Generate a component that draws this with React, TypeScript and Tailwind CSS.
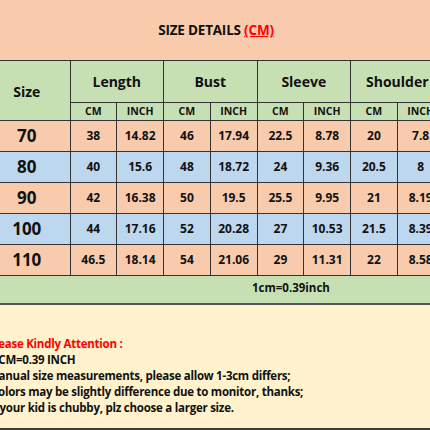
const rows = [
  { size: "70", v: ["38", "14.82", "46", "17.94", "22.5", "8.78", "20", "7.8"], bg: "bg-[#f8cbad]" },
  { size: "80", v: ["40", "15.6", "48", "18.72", "24", "9.36", "20.5", "8"], bg: "bg-[#bdd7ee]" },
  { size: "90", v: ["42", "16.38", "50", "19.5", "25.5", "9.95", "21", "8.19"], bg: "bg-[#f8cbad]" },
  { size: "100", v: ["44", "17.16", "52", "20.28", "27", "10.53", "21.5", "8.39"], bg: "bg-[#bdd7ee]" },
  { size: "110", v: ["46.5", "18.14", "54", "21.06", "29", "11.31", "22", "8.58"], bg: "bg-[#f8cbad]" },
];

const groups = ["Length", "Bust", "Sleeve", "Shoulder"];

export default function App() {
  return (
    <div
      className="relative h-[430px] w-[430px] overflow-hidden bg-[#f8cbad] text-[#111]"
      style={{ fontFamily: '"Open Sans", sans-serif' }}
    >
      <div className="flex h-[60px] items-center justify-center pl-[2px] pt-px text-[13.5px] font-bold tracking-[-0.2px]">
        SIZE DETAILS&nbsp;<span className="text-[#ff0000] underline">(CM)</span>
      </div>
      <table className="ml-[-16px] w-[460px] table-fixed border-collapse text-center font-bold">
        <colgroup>
          <col className="w-[86px]" />
          {Array.from({ length: 8 }, (_, i) => (
            <col key={i} className="w-[46.75px]" />
          ))}
        </colgroup>
        <tbody>
          <tr className="h-[42px] bg-[#c6e0b4]">
            <td rowSpan={2} className="border-y border-r border-[#333] pt-[2px] text-[14px]">
              Size
            </td>
            {groups.map((g) => (
              <td key={g} colSpan={2} className="border border-[#333] text-[14px]">
                {g}
              </td>
            ))}
          </tr>
          <tr className="h-[18px] bg-[#c6e0b4] text-[10.5px]">
            {groups.map((g) => [
              <td key={g + "cm"} className="border border-[#333] leading-none">CM</td>,
              <td key={g + "in"} className="border border-[#333] leading-none">INCH</td>,
            ])}
          </tr>
          {rows.map((r) => (
            <tr key={r.size} className={`h-[31px] ${r.bg}`}>
              <td className="border-y border-r border-[#333] text-[17px]">{r.size}</td>
              {r.v.map((x, i) => (
                <td key={i} className="border border-[#333] text-[12px]">
                  {x}
                </td>
              ))}
            </tr>
          ))}
          <tr className="h-[28px] bg-[#c6e0b4]">
            <td colSpan={9} className="border-t border-b-2 border-[#333] border-b-[#555] pb-[3px] pl-[268px] text-left text-[11.5px]">
              1cm=0.39inch
            </td>
          </tr>
        </tbody>
      </table>
      <div className="h-[125px] border-b-2 border-[#3a3a3a] bg-[#fff2cc] pt-[31px] text-[11.5px] font-bold leading-[16px] tracking-[-0.25px]">
        <div className="ml-[-12px] text-[#ff0000]">Please Kindly Attention :</div>
        <div className="ml-[-8px]">1CM=0.39 INCH</div>
        <div className="ml-[-12px]">Manual size measurements, please allow 1-3cm differs;</div>
        <div className="ml-[-9px]">Colors may be slightly difference due to monitor, thanks;</div>
        <div className="ml-[-11px]">If your kid is chubby, plz choose a larger size.</div>
      </div>
    </div>
  );
}
